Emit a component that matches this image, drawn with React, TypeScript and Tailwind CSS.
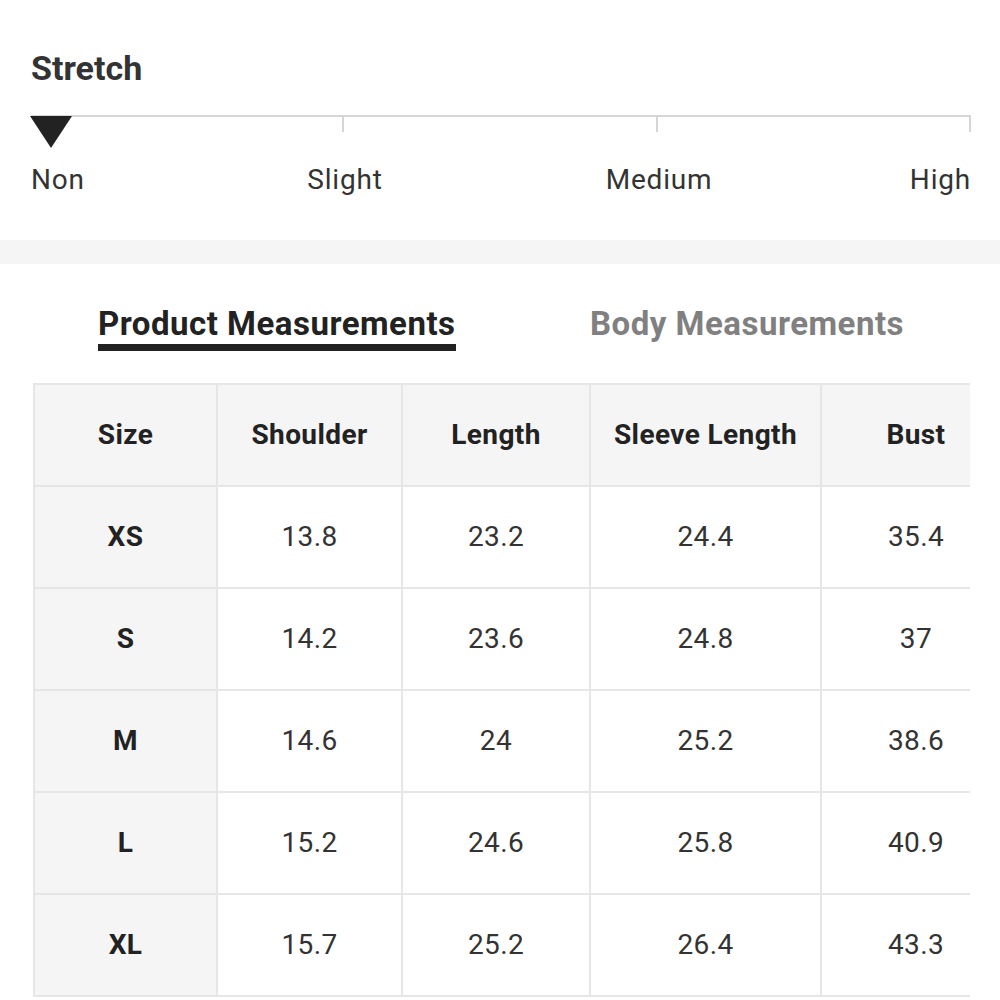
import React from "react";

const levels = ["Non", "Slight", "Medium", "High"];

const headers = ["Size", "Shoulder", "Length", "Sleeve Length", "Bust"];

const rows: [string, string, string, string, string][] = [
  ["XS", "13.8", "23.2", "24.4", "35.4"],
  ["S", "14.2", "23.6", "24.8", "37"],
  ["M", "14.6", "24", "25.2", "38.6"],
  ["L", "15.2", "24.6", "25.8", "40.9"],
  ["XL", "15.7", "25.2", "26.4", "43.3"],
];

const colWidths = ["w-[183px]", "w-[185px]", "w-[188px]", "w-[231px]", "w-[190px]"];

export default function App() {
  return (
    <div
      className="w-[1000px] h-[1000px] overflow-hidden bg-white text-[#222]"
      style={{ fontFamily: "Roboto, 'Noto Sans', sans-serif" }}
    >
      {/* Stretch */}
      <div className="px-[31px] pt-[48px] h-[240px]">
        <h2 className="text-[34px] leading-[40px] font-bold text-[#333]">Stretch</h2>

        <div className="relative mt-[27px] w-[940px]">
          <div className="grid grid-cols-3 border-t-2 border-[#d6d6d6]">
            <div className="h-[15px] border-r-2 border-[#d6d6d6]" />
            <div className="h-[15px] border-r-2 border-[#d6d6d6]" />
            <div className="h-[15px] border-r-2 border-[#d6d6d6]" />
          </div>
          {/* marker */}
          <div className="absolute left-[-1px] top-[1px] w-0 h-0 border-l-[21px] border-r-[21px] border-t-[32px] border-l-transparent border-r-transparent border-t-[#222]" />
        </div>

        <div className="relative mt-[33px] h-[30px] w-[940px] text-[28px] leading-[30px] tracking-[0.8px] text-[#333]">
          <span className="absolute left-0 top-0">{levels[0]}</span>
          <span className="absolute left-[314px] top-0 -translate-x-1/2">{levels[1]}</span>
          <span className="absolute left-[628px] top-0 -translate-x-1/2">{levels[2]}</span>
          <span className="absolute right-0 top-0">{levels[3]}</span>
        </div>
      </div>

      <div className="h-[24px] bg-[#f5f5f5]" />

      {/* Tabs */}
      <div className="grid grid-cols-[492px_1fr] pl-[98px] pt-[42px] h-[119px] text-[33px] leading-[36px] tracking-[0.5px] font-bold">
        <div>
          <div className="inline-block text-[#222] border-b-[7px] border-[#222] pb-[2px]">
            Product Measurements
          </div>
        </div>
        <div className="text-[#808080]">Body Measurements</div>
      </div>

      {/* Table */}
      <div className="ml-[33px] w-[937px] overflow-hidden">
        <table className="table-fixed border-collapse w-[977px] text-[28px] tracking-[0.4px] text-center text-[#222]">
          <thead>
            <tr className="bg-[#f5f5f5] h-[102px]">
              {headers.map((h, i) => (
                <th key={h} className={`${colWidths[i]} border-2 border-[#e6e6e6] font-bold`}>
                  {h}
                </th>
              ))}
            </tr>
          </thead>
          <tbody>
            {rows.map((r) => (
              <tr key={r[0]} className="h-[102px]">
                {r.map((v, i) => (
                  <td
                    key={i}
                    className={
                      i === 0
                        ? "border-2 border-[#e6e6e6] bg-[#f5f5f5] font-bold"
                        : "border-2 border-[#e6e6e6] font-normal text-[#333]"
                    }
                  >
                    {v}
                  </td>
                ))}
              </tr>
            ))}
          </tbody>
        </table>
      </div>
    </div>
  );
}
